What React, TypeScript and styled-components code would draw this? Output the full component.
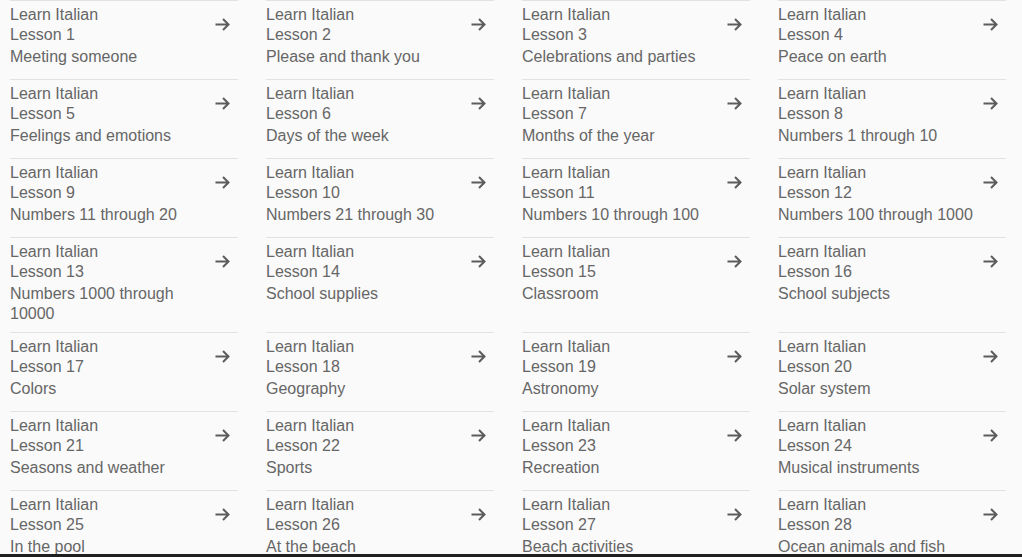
import styled, { createGlobalStyle } from "styled-components";

const lessons = [
    "Meeting someone",
    "Please and thank you",
    "Celebrations and parties",
    "Peace on earth",
    "Feelings and emotions",
    "Days of the week",
    "Months of the year",
    "Numbers 1 through 10",
    "Numbers 11 through 20",
    "Numbers 21 through 30",
    "Numbers 10 through 100",
    "Numbers 100 through 1000",
    "Numbers 1000 through 10000",
    "School supplies",
    "Classroom",
    "School subjects",
    "Colors",
    "Geography",
    "Astronomy",
    "Solar system",
    "Seasons and weather",
    "Sports",
    "Recreation",
    "Musical instruments",
    "In the pool",
    "At the beach",
    "Beach activities",
    "Ocean animals and fish",
];

const GlobalStyle = createGlobalStyle`
    html, body {
        margin: 0;
        padding: 0;
        background: #fafafa;
    }
`;

const ArrowIcon = () => (
    <svg width="15" height="13" viewBox="0 0 15 13" fill="none">
        <path d="M0.5 6.5H13.5M8 1L13.5 6.5L8 12" stroke="#5c5c5c" strokeWidth="2"/>
    </svg>
);

const App = () => {
    return (
        <Page>
            <GlobalStyle/>
            <Content>
                <LessonGrid>
                    {lessons.map((title, i) => (
                        <LessonCard key={i}>
                            <TextBlock>
                                <Line>Learn Italian</Line>
                                <Line>Lesson {i + 1}</Line>
                                <Description>{title}</Description>
                            </TextBlock>
                            <ArrowSlot>
                                <ArrowIcon/>
                            </ArrowSlot>
                        </LessonCard>
                    ))}
                </LessonGrid>
            </Content>
            <BottomEdge/>
        </Page>
    );
};

const Page = styled.div`
    display: flex;
    flex-direction: column;
    height: 557px;
    overflow: hidden;
    font-family: "Liberation Sans", Arial, sans-serif;
`;

const Content = styled.div`
    flex: 1;
    overflow: hidden;
    padding-left: 10px;
`;

const LessonGrid = styled.div`
    display: grid;
    grid-template-columns: repeat(4, 228px);
    column-gap: 28px;
`;

const LessonCard = styled.div`
    display: flex;
    box-sizing: border-box;
    min-height: 79px;
    padding: 4px 0 8px;
    border-top: 1px solid #e2e2e2;
`;

const TextBlock = styled.div`
    flex: 1;
    min-width: 0;
    display: flex;
    flex-direction: column;
    color: #666666;
    font-size: 16px;
    line-height: 20px;
`;

const Line = styled.span`
    white-space: nowrap;
`;

const Description = styled.span`
    margin-top: 2px;
`;

const ArrowSlot = styled.div`
    display: flex;
    align-items: center;
    justify-content: center;
    width: 15px;
    height: 40px;
    margin: -1px 8px 0 0;
`;

const BottomEdge = styled.div`
    height: 3px;
    background: #1f1f1f;
`;

export default App;
